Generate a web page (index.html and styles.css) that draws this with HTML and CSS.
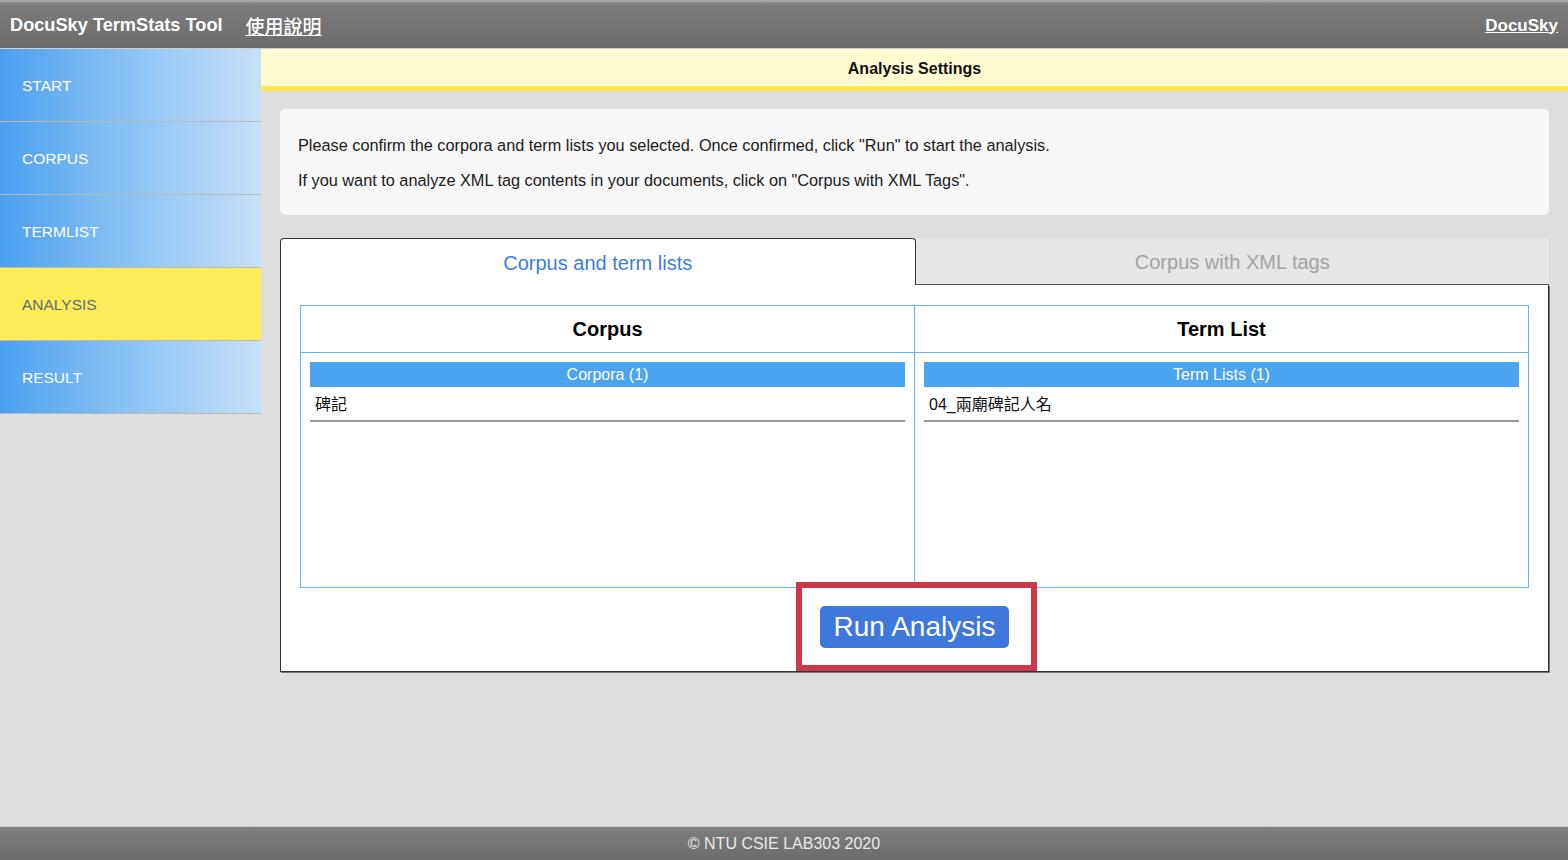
FILE: index.html
```html
<!DOCTYPE html>
<html lang="en">
<head>
<meta charset="utf-8">
<title>DocuSky TermStats Tool</title>
<link rel="stylesheet" href="styles.css">
</head>
<body>
<div class="app">
  <header class="topbar">
    <div class="brand">
      <span class="title">DocuSky TermStats Tool</span>
      <a class="help" href="#">使用說明</a>
    </div>
    <a class="docusky" href="#">DocuSky</a>
  </header>
  <div class="middle">
    <nav class="sidebar">
      <div class="nav-item">START</div>
      <div class="nav-item">CORPUS</div>
      <div class="nav-item">TERMLIST</div>
      <div class="nav-item active">ANALYSIS</div>
      <div class="nav-item">RESULT</div>
    </nav>
    <main class="content">
      <div class="settings-bar">Analysis Settings</div>
      <div class="content-body">
        <div class="info-box">
          <p>Please confirm the corpora and term lists you selected. Once confirmed, click "Run" to start the analysis.</p>
          <p>If you want to analyze XML tag contents in your documents, click on "Corpus with XML Tags".</p>
        </div>
        <div class="tabs">
          <div class="tab active">Corpus and term lists</div>
          <div class="tab">Corpus with XML tags</div>
        </div>
        <div class="panel">
          <div class="sel-table">
            <div class="col">
              <div class="col-head">Corpus</div>
              <div class="col-body">
                <div class="list-bar">Corpora (1)</div>
                <div class="list-item">碑記</div>
              </div>
            </div>
            <div class="col">
              <div class="col-head">Term List</div>
              <div class="col-body">
                <div class="list-bar">Term Lists (1)</div>
                <div class="list-item">04_兩廟碑記人名</div>
              </div>
            </div>
          </div>
          <div class="run-row">
            <div class="run-wrap">
              <button class="run-btn">Run Analysis</button>
              <div class="highlight"></div>
            </div>
          </div>
        </div>
      </div>
    </main>
  </div>
  <footer class="footer">© NTU CSIE LAB303 2020</footer>
</div>
</body>
</html>
```

FILE: styles.css
```css
* { box-sizing: border-box; }
html, body { margin: 0; padding: 0; }
body {
  font-family: "Liberation Sans", "Noto Sans CJK TC", Arial, sans-serif;
  background: #dedede;
  color: #111;
}
.app {
  display: flex;
  flex-direction: column;
  height: 860px;
  width: 1568px;
}
.topbar {
  height: 49px;
  flex: none;
  display: flex;
  align-items: center;
  justify-content: space-between;
  padding: 1px 10px 0 10px;
  background: linear-gradient(#8d8d8d 0px, #7c7c7c 4px, #6b6b6b 100%);
  border-top: 2px solid #a8a8a8;
  border-bottom: 1px solid #cfcfcf;
}
.brand { display: flex; align-items: center; gap: 23px; }
.title {
  color: #fff;
  font-weight: bold;
  font-size: 18.2px;
}
.help, .docusky {
  color: #fff;
  text-decoration: underline;
}
.help { font-family: "Noto Sans CJK TC", sans-serif; font-size: 19px; font-weight: 500; }
.docusky { font-weight: bold; font-size: 17px; }

.middle {
  flex: 1;
  display: flex;
  min-height: 0;
}
.sidebar {
  width: 261px;
  flex: none;
  display: flex;
  flex-direction: column;
}
.nav-item {
  height: 73px;
  border-bottom: 1px solid #b9b9b9;
  background: linear-gradient(90deg, #4aa0ef 0%, #86c0f3 45%, #c6e0f8 100%);
  color: #fff;
  font-size: 15.5px;
  padding-left: 22px;
  padding-top: 1px;
  display: flex;
  align-items: center;
}
.nav-item.active {
  background: #fcec5a;
  color: #6a6a6a;
}

.content {
  flex: 1;
  display: flex;
  flex-direction: column;
}
.settings-bar {
  height: 42px;
  background: #fffcd2;
  border-bottom: 5px solid #fde84a;
  text-align: center;
  font-weight: bold;
  font-size: 16px;
  line-height: 40px;
  color: #111;
}
.content-body {
  padding: 18px 19px 0 19px;
}
.info-box {
  background: #f7f7f7;
  border-radius: 5px;
  padding: 19px 18px 17px;
  font-size: 16.3px;
  color: #1a1a1a;
}
.info-box p {
  margin: 0;
  line-height: 35px;
}
.tabs {
  margin-top: 23px;
  display: flex;
  height: 47px;
}
.tab {
  flex: 1;
  display: flex;
  align-items: center;
  justify-content: center;
  font-size: 20px;
  padding-top: 2px;
  color: #a3a3a3;
  background: #e6e6e6;
  border-bottom: 1px solid #555;
  border-top-right-radius: 4px;
}
.tab.active {
  background: #fff;
  color: #3b7ee0;
  border: 1px solid #333;
  border-bottom: none;
  border-radius: 4px 4px 0 0;
}
.panel {
  background: #fff;
  border: 1px solid #333;
  border-top: none;
  box-shadow: 1px 1px 0 #777;
  padding: 20px 19px 0 19px;
  height: 387px;
}
.sel-table {
  display: flex;
  border: 1px solid #6ab3f6;
  height: 283px;
}
.col {
  flex: 1;
  display: flex;
  flex-direction: column;
}
.col + .col { border-left: 1px solid #6ab3f6; }
.col-head {
  height: 47px;
  border-bottom: 1px solid #6ab3f6;
  display: flex;
  align-items: center;
  justify-content: center;
  font-weight: bold;
  font-size: 20px;
  padding-top: 1px;
  color: #000;
}
.col-body {
  padding: 9px;
}
.list-bar {
  background: #4aa4ef;
  color: #fff;
  height: 25px;
  line-height: 25px;
  text-align: center;
  font-size: 16px;
}
.list-item {
  height: 35px;
  line-height: 35px;
  padding-left: 5px;
  font-size: 16px;
  border-bottom: 2px solid #999;
  color: #111;
}
.run-row {
  display: flex;
  justify-content: center;
  margin-top: 18px;
}
.run-wrap {
  position: relative;
}
.run-btn {
  display: block;
  height: 42px;
  width: 189px;
  padding: 0;
  border: none;
  border-radius: 5px;
  background: #3f78dd;
  color: #fff;
  font-family: "Liberation Sans", Arial, sans-serif;
  font-size: 28px;
}
.highlight {
  position: absolute;
  left: -24px;
  right: -28px;
  top: -24px;
  bottom: -23px;
  border: 6px solid #cd3749;
  pointer-events: none;
}
.footer {
  margin-top: auto;
  height: 34px;
  flex: none;
  background: linear-gradient(#7e7e7e, #6c6c6c);
  border-top: 1px solid #c8c8c8;
  color: #eaeaea;
  text-align: center;
  font-size: 16px;
  line-height: 33px;
}
```
